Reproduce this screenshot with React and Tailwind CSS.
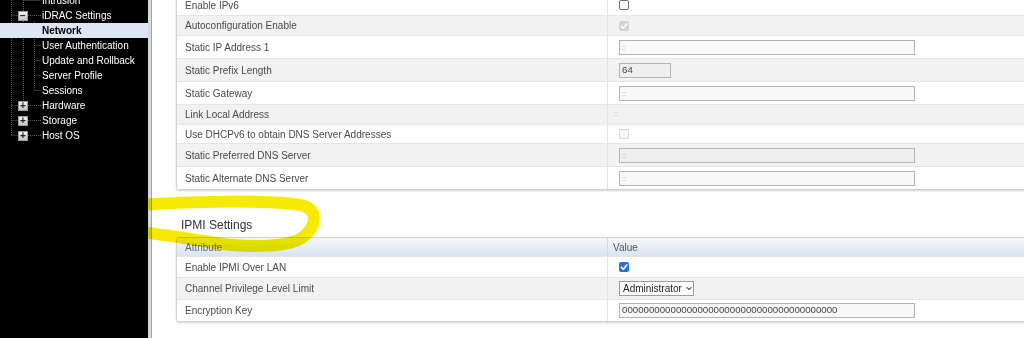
import React from 'react';
import { ChevronDown } from 'lucide-react';

const tree = [
  { label: 'Intrusion', parent: false },
  { label: 'iDRAC Settings', parent: true, open: true },
  { label: 'Network', parent: false, active: true },
  { label: 'User Authentication', parent: false },
  { label: 'Update and Rollback', parent: false },
  { label: 'Server Profile', parent: false },
  { label: 'Sessions', parent: false },
  { label: 'Hardware', parent: true },
  { label: 'Storage', parent: true },
  { label: 'Host OS', parent: true },
];

const Tick = () => (
  <svg width="10" height="10" viewBox="0 0 10 10" className="block">
    <path d="M2.2 5.2 L4.2 7.2 L7.9 2.9" fill="none" stroke="#fff" strokeWidth="1.6" strokeLinecap="round" strokeLinejoin="round" />
  </svg>
);

const Box = ({ state }) => {
  if (state === 'on')
    return <span className="block w-[10px] h-[10px] rounded-[2px] bg-[#2470e3]"><Tick /></span>;
  if (state === 'disabledOn')
    return <span className="block w-[10px] h-[10px] rounded-[2px] bg-[#d2d2d2]"><Tick /></span>;
  if (state === 'disabledOff')
    return <span className="block w-[10px] h-[10px] rounded-[2px] border border-[#d4d4d4] bg-[#fafafa]" />;
  return <span className="block w-[10px] h-[10px] rounded-[2px] border border-[#6f6f6f] bg-white" />;
};

const Field = ({ value, wide = true, muted = false, dark = false }) => (
  <div
    className={`flex items-center h-[15px] border border-[#b4b4b4] pl-[2px] ${wide ? 'w-[296px]' : 'w-[52px]'} ${muted ? 'bg-[#efefef]' : 'bg-[#f9f9f9]'}`}
  >
    <span className={dark ? 'text-[9.7px] text-[#444]' : 'text-[7px] leading-[7px] text-[#9a9a9a]'}>{value}</span>
  </div>
);

const ipv6Rows = [
  { label: 'Enable IPv6', h: 'h-[20px]', value: <Box state="off" /> },
  { label: 'Autoconfiguration Enable', h: 'h-[20px]', gray: true, value: <Box state="disabledOn" /> },
  { label: 'Static IP Address 1', h: 'h-[23px]', value: <Field value="::" /> },
  { label: 'Static Prefix Length', h: 'h-[23px]', gray: true, value: <Field value="64" wide={false} muted dark /> },
  { label: 'Static Gateway', h: 'h-[23px]', value: <Field value="::" /> },
  { label: 'Link Local Address', h: 'h-[20px]', gray: true, value: <span className="text-[7px] text-[#aaa] -ml-[5px]">::</span> },
  { label: 'Use DHCPv6 to obtain DNS Server Addresses', h: 'h-[19px]', value: <Box state="disabledOff" /> },
  { label: 'Static Preferred DNS Server', h: 'h-[23px]', gray: true, value: <Field value="::" muted /> },
  { label: 'Static Alternate DNS Server', h: 'h-[23px]', value: <Field value="::" /> },
];

const ipmiRows = [
  { label: 'Enable IPMI Over LAN', h: 'h-[21px]', value: <Box state="on" /> },
  {
    label: 'Channel Privilege Level Limit',
    h: 'h-[22px]',
    gray: true,
    value: (
      <div className="flex items-center gap-[3px] h-[15px] w-[75px] border border-[#9d9d9d] bg-white pl-[3px]">
        <span className="text-[10px] text-[#222]">Administrator</span>
        <ChevronDown size={9} strokeWidth={3} className="text-[#222]" />
      </div>
    ),
  },
  {
    label: 'Encryption Key',
    h: 'h-[22px]',
    value: <Field value="0000000000000000000000000000000000000000" dark />,
  },
];

const Row = ({ row, first }) => (
  <div className={`flex ${row.h} ${row.gray ? 'bg-[#f2f2f2]' : 'bg-white'} ${first ? '' : 'border-t border-[#e5e5e5]'}`}>
    <div className="w-[430px] shrink-0 pl-[8px] flex items-center text-[10px] text-[#4a4a4a]">{row.label}</div>
    <div className="flex-1 border-l border-[#e2e2e2] flex items-center pl-[11px]">{row.value}</div>
  </div>
);

const Sidebar = () => (
  <div className="relative w-[148px] shrink-0 h-full bg-black overflow-hidden">
    <svg className="absolute left-0 top-0" width="148" height="338">
      <g stroke="#5e5e5e" strokeWidth="1" strokeDasharray="1 1" fill="none">
        <path d="M11.5 0 V136" />
        <path d="M23.5 0 V11" />
        <path d="M23.5 21 V103" />
        <path d="M34.5 21 V91" />
        <path d="M11.5 15.5 H18" />
        <path d="M28 15.5 H41" />
        <path d="M11.5 105.5 H18" />
        <path d="M28 105.5 H41" />
        <path d="M11.5 120.5 H18" />
        <path d="M28 120.5 H41" />
        <path d="M11.5 135.5 H18" />
        <path d="M28 135.5 H41" />
        <path d="M23.5 0.5 H41" />
        <path d="M34.5 45.5 H41" />
        <path d="M34.5 60.5 H41" />
        <path d="M34.5 75.5 H41" />
        <path d="M34.5 90.5 H41" />
      </g>
    </svg>
    <div className="relative -mt-[7px]">
      {tree.map((n) => (
        <div
          key={n.label}
          className={`flex items-center h-[15px] text-[10px] ${n.active ? 'bg-[#dce6f5] text-black font-bold' : 'text-white'}`}
        >
          {n.parent ? (
            <>
              <span className="ml-[18px] w-[10px] h-[10px] flex items-center justify-center border border-[#9a9a9a] bg-gradient-to-b from-[#f4f4f4] to-[#c4c4c4] text-[#222] text-[10px] leading-none font-bold">
                {n.open ? '−' : '+'}
              </span>
              <span className="ml-[14px]">{n.label}</span>
            </>
          ) : (
            <span className="ml-[42px]">{n.label}</span>
          )}
        </div>
      ))}
    </div>
  </div>
);

export default function App() {
  return (
    <div className="flex w-[1024px] h-[338px] overflow-hidden bg-white font-['Liberation_Sans',Arial,sans-serif]">
      <Sidebar />
      <div className="relative flex flex-1 h-full overflow-hidden">
        <div className="w-[3px] shrink-0 bg-[#dadada]" />
        <div className="w-px shrink-0 bg-[#a3a3a3]" />
        <div className="flex-1 flex flex-col">
          <div className="ml-[24px] -mt-[5px] w-[880px] border-x border-b border-[#d2d2d2] rounded-b-[3px] shadow-[0_1px_2px_rgba(0,0,0,0.18)] overflow-hidden">
            {ipv6Rows.map((r, i) => (
              <Row key={r.label} row={r} first={i === 0} />
            ))}
          </div>

          <div className="ml-[29px] mt-[27px] h-[16px] text-[12px] leading-[16px] text-[#333]">IPMI Settings</div>

          <div className="ml-[24px] mt-[4px] w-[880px] border border-[#d2d2d2] rounded-[3px] shadow-[0_1px_2px_rgba(0,0,0,0.18)] overflow-hidden">
            <div className="flex h-[18px] bg-gradient-to-b from-[#f3f7fc] to-[#d9e5f3]">
              <div className="w-[430px] shrink-0 pl-[8px] flex items-center text-[10px] text-[#666]">Attribute</div>
              <div className="flex-1 border-l border-[#d0d9e4] flex items-center pl-[5px] text-[10px] text-[#555]">Value</div>
            </div>
            {ipmiRows.map((r) => (
              <Row key={r.label} row={r} />
            ))}
          </div>
        </div>

        {/* marker annotation */}
        <svg
          className="absolute left-0 top-0 pointer-events-none mix-blend-multiply"
          width="876"
          height="338"
          viewBox="148 0 876 338"
        >
          <path
            d="M138 205 C200 201, 270 200, 300 205 C319 208, 317 226, 303 237 C290 247, 250 248, 215 243 C185 238, 160 234, 138 232"
            fill="none"
            stroke="#f5ea00"
            strokeWidth="12"
            strokeLinecap="round"
            strokeLinejoin="round"
          />
        </svg>
      </div>
    </div>
  );
}
